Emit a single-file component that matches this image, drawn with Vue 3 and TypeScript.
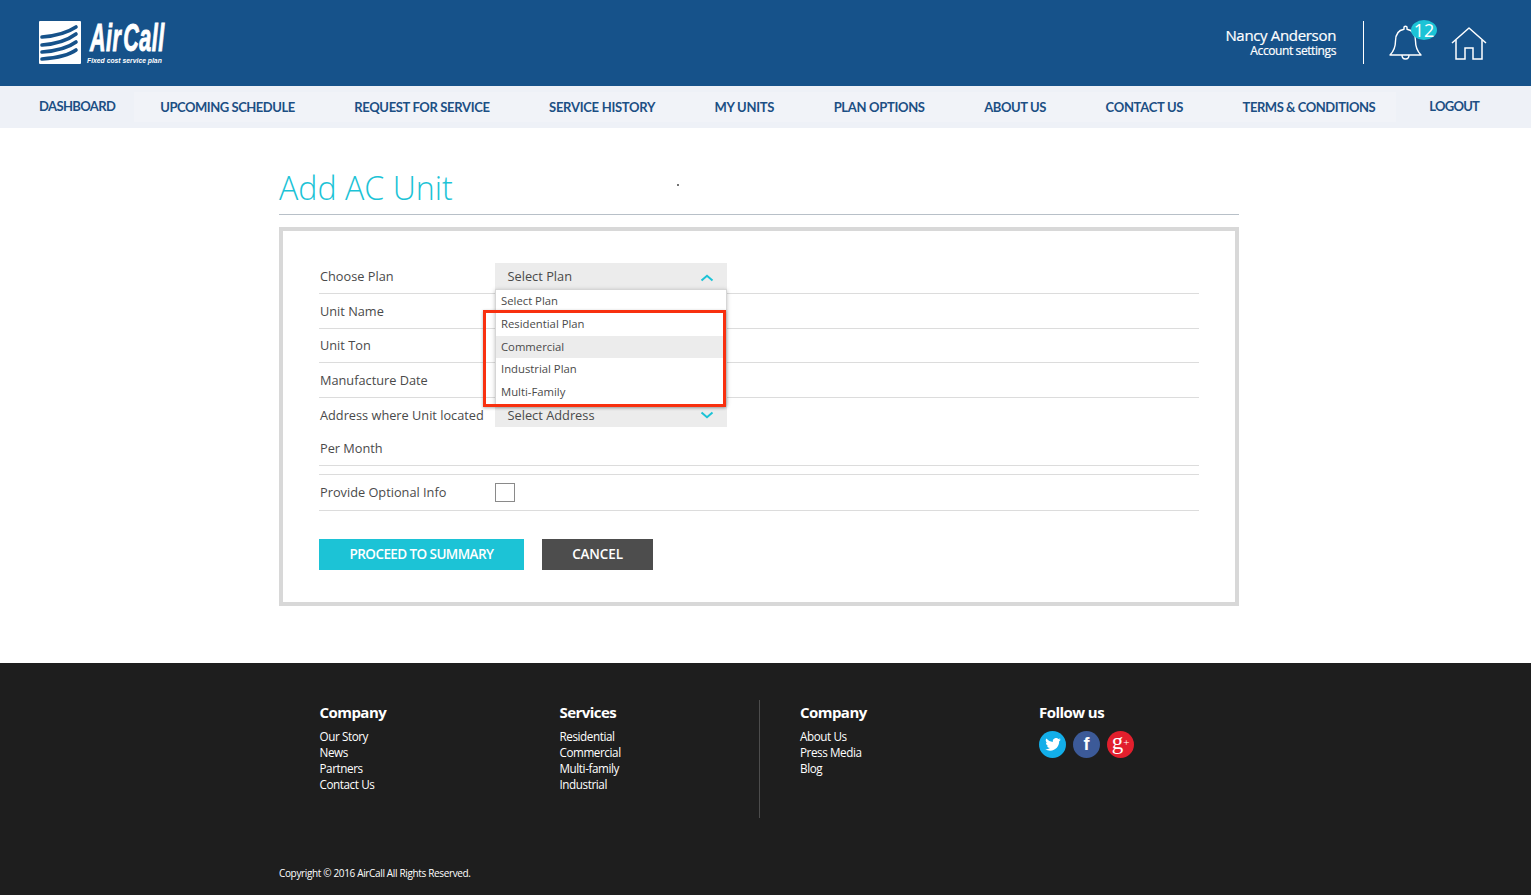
<script setup lang="ts">
const midItems: { label: string; track: number }[] = [
  { label: 'UPCOMING SCHEDULE', track: -0.46 },
  { label: 'REQUEST FOR SERVICE', track: -0.35 },
  { label: 'SERVICE HISTORY', track: -0.27 },
  { label: 'MY UNITS', track: -0.28 },
  { label: 'PLAN OPTIONS', track: -0.32 },
  { label: 'ABOUT US', track: -0.4 },
  { label: 'CONTACT US', track: -0.3 },
  { label: 'TERMS & CONDITIONS', track: -0.45 },
]
const options = ['Select Plan', 'Residential Plan', 'Commercial', 'Industrial Plan', 'Multi-Family']
const footerCols = [
  { title: 'Company', links: ['Our Story', 'News', 'Partners', 'Contact Us'] },
  { title: 'Services', links: ['Residential', 'Commercial', 'Multi-family', 'Industrial'] },
  { title: 'Company', links: ['About Us', 'Press Media', 'Blog'] },
]
</script>

<template>
  <div class="page">
    <header class="top">
      <div class="logo">
        <svg class="logo-mark" width="42" height="43" viewBox="0 0 42 43">
          <rect width="42" height="43" rx="1" fill="#fff" />
          <g fill="none" stroke="#16528a" stroke-width="3.6" stroke-linecap="round">
            <path d="M3 16 C16 15 28 12 37 6" />
            <path d="M3 24 C16 23 29 19 37 13" />
            <path d="M3 31 C16 30 29 27 37 21" />
            <path d="M3 38 C16 37 29 35 37 29" />
          </g>
        </svg>
        <div class="logo-text">
          <div class="logo-name">Air<span class="logo-call">Call</span></div>
          <div class="logo-tag">Fixed cost service plan</div>
        </div>
      </div>
      <div class="top-right">
        <div class="user">
          <div class="user-name">Nancy Anderson</div>
          <div class="user-sub">Account settings</div>
        </div>
        <div class="divider"></div>
        <div class="bell">
          <svg width="34" height="36" viewBox="0 0 34 36" fill="none" stroke="#fff" stroke-width="1.4">
            <path d="M1 31 C5 27 6.500 23 6.500 17 C6.500 10 10 6 15 5.200 L15 3 Q16.500 1.500 18 3 L18 5.200 C23 6 26.500 10 26.500 17 C26.500 23 28 27 32 31 Z" stroke-linejoin="round" />
            <path d="M13 31 Q13 35 16.500 35 Q20 35 20 31" />
          </svg>
          <span class="badge">12</span>
        </div>
        <svg class="house" width="36" height="33" viewBox="0 0 36 33" fill="none" stroke="#fff" stroke-width="1.500">
          <path d="M1 16 L18 1 L35 16" stroke-linejoin="round" />
          <path d="M5 13 V32 H14 V21 H22 V32 H31 V13" />
        </svg>
      </div>
    </header>

    <nav class="nav">
      <a class="nav-item nav-outer nav-dash">DASHBOARD</a>
      <div class="nav-mid">
        <a
          v-for="item in midItems"
          :key="item.label"
          class="nav-item"
          :style="{ letterSpacing: item.track + 'px' }"
        >{{ item.label }}</a>
      </div>
      <a class="nav-item nav-outer nav-logout">LOGOUT</a>
    </nav>

    <main class="main">
      <h1 class="title">Add AC Unit</h1>
      <span class="speck"></span>
      <section class="card">
        <div class="row row-1">
          <label>Choose Plan</label>
          <div class="select select-plan">
            <span>Select Plan</span>
            <svg class="chev up" width="14" height="8" viewBox="0 0 14 8" fill="none" stroke="#1cc3d6" stroke-width="2">
              <path d="M1.500 6.500 L7 1.800 L12.500 6.500" />
            </svg>
          </div>
          <ul class="dropdown">
            <li v-for="o in options" :key="o" :class="{ hot: o === 'Commercial' }">{{ o }}</li>
          </ul>
          <div class="annotation"></div>
        </div>
        <div class="row row-2"><label>Unit Name</label></div>
        <div class="row row-3"><label>Unit Ton</label></div>
        <div class="row row-2"><label>Manufacture Date</label></div>
        <div class="row row-addr">
          <label>Address where Unit located</label>
          <div class="select select-addr">
            <span>Select Address</span>
            <svg class="chev" width="14" height="8" viewBox="0 0 14 8" fill="none" stroke="#1cc3d6" stroke-width="2">
              <path d="M1.500 1.500 L7 6.200 L12.500 1.500" />
            </svg>
          </div>
        </div>
        <div class="row row-per"><label>Per Month</label></div>
        <div class="row row-opt">
          <label>Provide Optional Info</label>
          <span class="check"></span>
        </div>
        <div class="actions">
          <button class="btn btn-go">PROCEED TO SUMMARY</button>
          <button class="btn btn-cancel">CANCEL</button>
        </div>
      </section>
    </main>

    <footer class="footer">
      <div class="foot-cols">
        <div class="foot-col" v-for="(c, i) in footerCols" :key="i" :class="'col-' + i">
          <h4>{{ c.title }}</h4>
          <a v-for="l in c.links" :key="l">{{ l }}</a>
        </div>
        <div class="foot-col col-3">
          <h4>Follow us</h4>
          <div class="socials">
            <span class="soc tw">
              <svg width="16" height="13" viewBox="0 0 24 20" fill="#fff">
                <path d="M24 2.400a9.800 9.800 0 0 1-2.800.8A5 5 0 0 0 23.300.500a9.800 9.800 0 0 1-3.100 1.200A4.900 4.900 0 0 0 11.800 6.200 14 14 0 0 1 1.700.900a4.900 4.900 0 0 0 1.500 6.600 4.900 4.900 0 0 1-2.200-.6v.1a4.900 4.900 0 0 0 3.900 4.800 4.900 4.900 0 0 1-2.200.1 4.900 4.900 0 0 0 4.600 3.400A9.900 9.900 0 0 1 0 17.300 14 14 0 0 0 7.500 19.500c9.100 0 14-7.500 14-14v-.6A10 10 0 0 0 24 2.400z" />
              </svg>
            </span>
            <span class="soc fb">f</span>
            <span class="soc gp">g<sup>+</sup></span>
          </div>
        </div>
      </div>
      <div class="copy">Copyright © 2016 AirCall All Rights Reserved.</div>
    </footer>
  </div>
</template>

<style scoped>
.page {
  width: 1531px;
  height: 895px;
  overflow: hidden;
  background: #fff;
  font-family: "Open Sans", sans-serif;
  color: #4a4a4a;
}
.top {
  height: 86px;
  background: #16528a;
  display: flex;
  align-items: flex-start;
  justify-content: space-between;
  padding: 0 44px 0 39px;
  box-sizing: border-box;
}
.logo { display: flex; margin-top: 21px; }
.logo-mark { display: block; }
.logo-text { margin-left: 6px; color: #fff; width: 90px; }
.logo-name {
  font-family: "Liberation Sans", sans-serif;
  font-weight: 700;
  font-style: italic;
  font-size: 38px;
  line-height: 34px;
  height: 34px;
  margin-left: 3px;
  white-space: nowrap;
  transform: scaleX(0.565);
  transform-origin: left top;
  -webkit-text-stroke: 1px #fff;
  letter-spacing: 1px;
}
.logo-call { margin-left: 3px; }
.logo-tag {
  font-family: "Liberation Sans", sans-serif;
  font-weight: 700;
  font-style: italic;
  font-size: 6.8px;
  line-height: 10px;
  margin-top: 1px;
  white-space: nowrap;
}
.top-right { display: flex; align-items: flex-start; color: #fff; }
.user { text-align: right; margin-top: 26px; }
.user-name { font-size: 15px; line-height: 18px; letter-spacing: -0.33px; -webkit-text-stroke: 0.2px #fff; }
.user-sub { font-size: 12px; line-height: 14px; letter-spacing: -0.4px; -webkit-text-stroke: 0.2px #fff; }
.divider { width: 1px; height: 43px; background: #fff; margin: 21px 25px 0 27px; }
.bell { position: relative; width: 34px; height: 36px; margin-top: 24px; }
.bell svg { display: block; }
.badge {
  position: absolute;
  left: 22px;
  top: -4px;
  width: 26px;
  height: 20px;
  border-radius: 50%;
  background: #1cc3d6;
  color: #fff;
  font-size: 18px;
  line-height: 20px;
  text-align: center;
}
.house { margin: 27px 0 0 28px; display: block; }
.nav {
  height: 42px;
  background: #eef1f7;
  display: flex;
  align-items: center;
  padding: 0 0 0 39px;
  box-sizing: border-box;
}
.nav-mid {
  display: flex;
  align-items: center;
  gap: 59.5px;
  height: 30px;
  margin: 0 33px 0 19px;
  padding: 0 21px 0 26px;
  background: #f1f3f8;
}
.nav-item {
  font-family: Lato, sans-serif;
  font-weight: 700;
  font-size: 13px;
  color: #1c4f84;
  white-space: nowrap;
}
.nav-outer { margin-bottom: 2px; }
.nav-dash { letter-spacing: -0.62px; }
.nav-logout { letter-spacing: -0.73px; }
.main { position: relative; width: 960px; margin: 0 auto 0 279px; padding-top: 38px; height: 535px; box-sizing: border-box; }
.title {
  margin: 0;
  font-weight: 300;
  font-size: 32.2px;
  line-height: 43px;
  color: #1cc3d6;
  height: 49px;
  box-sizing: border-box;
  border-bottom: 1px solid #b8c0c8;
}
.speck { position: absolute; left: 398px; top: 56px; width: 2px; height: 2px; background: #444; border-radius: 50%; }
.card {
  margin-top: 12px;
  border: 4px solid #d8d8d8;
  padding: 32px 36px 32px 36px;
  height: 379px;
  box-sizing: border-box;
}
.row {
  position: relative;
  display: flex;
  align-items: center;
  font-size: 12.75px;
  border-bottom: 1px solid #dcdcdc;
  box-sizing: border-box;
}
.row label { width: 175px; margin-left: 1px; flex: none; white-space: nowrap; color: #4a4a4a; }
.row-1 { height: 31px; }
.row-1 label { margin-bottom: 4px; }
.row-2 { height: 35px; }
.row-3 { height: 34px; }
.row-3 label { margin-bottom: 2px; }
.row-addr { height: 34px; border-bottom: none; }
.row-per { height: 34px; margin-bottom: 8px; }
.row-per label { margin-bottom: 2px; }
.row-opt { height: 37px; border-top: 1px solid #dcdcdc; }
.row-opt label { margin-bottom: 2px; }
.select {
  width: 232px;
  background: #ececec;
  display: flex;
  align-items: center;
  justify-content: space-between;
  padding: 0 13px 0 12.5px;
  box-sizing: border-box;
  font-size: 12.8px;
  color: #4a4a4a;
}
.select-plan { height: 27px; margin-bottom: 3px; padding-bottom: 2px; }
.chev.up { margin-top: 5px; }
.select-addr { height: 24px; align-self: flex-start; margin-top: 5px; }
.dropdown {
  position: absolute;
  z-index: 2;
  left: 176px;
  top: 26px;
  width: 232px;
  height: 116px;
  margin: 0;
  padding: 0;
  list-style: none;
  background: #fff;
  border: 1px solid #d6d6d6;
  box-sizing: border-box;
  box-shadow: 0 1px 4px rgba(0, 0, 0, 0.25);
}
.dropdown li {
  height: 22.75px;
  line-height: 22.75px;
  padding-left: 5px;
  font-size: 11.3px;
  color: #4a4a4a;
}
.dropdown li.hot { background: #ececec; }
.annotation {
  position: absolute;
  z-index: 3;
  left: 164px;
  top: 47px;
  width: 243px;
  height: 97px;
  box-sizing: border-box;
  border: 3px solid #f8300f;
  box-shadow: 0 1px 3px rgba(0, 0, 0, 0.3);
}
.check {
  width: 20px;
  height: 19px;
  border: 1px solid #8a8a8a;
  box-sizing: border-box;
  background: #fff;
}
.actions { display: flex; margin-top: 28px; }
.btn {
  border: none;
  height: 31px;
  color: #fff;
  font-family: "Open Sans", sans-serif;
  font-weight: 600;
  font-size: 13.5px;
  padding: 0 0 2px;
}
.btn-go { width: 205px; background: #1cc3d6; letter-spacing: -0.58px; }
.btn-cancel { width: 111px; margin-left: 18px; background: #4d4d4d; letter-spacing: -0.13px; }
.footer {
  position: relative;
  height: 232px;
  background: #1e1e1e;
  color: #fff;
  box-sizing: border-box;
  padding: 37px 0 0 319.5px;
}
.foot-cols { display: flex; height: 118px; }
.foot-col { display: flex; flex-direction: column; box-sizing: border-box; }
.col-0 { width: 240px; }
.col-1 { width: 200.5px; border-right: 1px solid #4c4c4c; }
.col-2 { padding-left: 40px; box-sizing: content-box; width: 239px; }
.foot-col h4 {
  margin: 0 0 5px;
  padding-top: 2px;
  font-size: 15px;
  line-height: 21px;
  font-weight: 700;
  letter-spacing: -0.55px;
  color: #fff;
}
.foot-col a {
  font-size: 11.7px;
  line-height: 16px;
  letter-spacing: -0.42px;
  color: #fff;
}
.socials { display: flex; gap: 7px; margin-top: 3px; }
.soc {
  width: 27px;
  height: 27px;
  border-radius: 50%;
  display: flex;
  align-items: center;
  justify-content: center;
  color: #fff;
}
.tw { background: #12aee9; }
.fb {
  background: #3c5a98;
  font-family: "Liberation Sans", sans-serif;
  font-weight: 700;
  font-size: 18px;
}
.gp {
  background: #e21f2d;
  font-family: "Liberation Serif", serif;
  font-size: 23px;
  line-height: 22px;
  padding-bottom: 5px;
  box-sizing: border-box;
}
.gp sup { font-size: 11px; line-height: 0; vertical-align: 7px; }
.copy {
  position: absolute;
  left: 279px;
  top: 202px;
  font-size: 10px;
  line-height: 16px;
  letter-spacing: -0.35px;
  color: #fff;
}
</style>
